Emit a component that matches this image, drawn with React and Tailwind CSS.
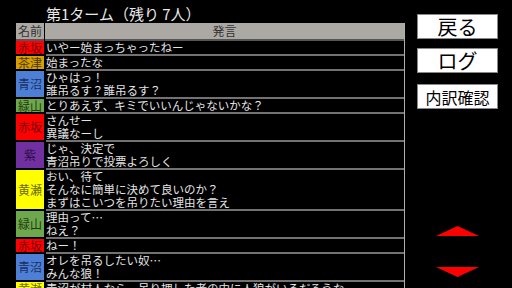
const rows = [
  { n: "赤坂", bg: "bg-[#ff0000]", fg: "text-[#7a0000]", t: ["いやー始まっちゃったねー"] },
  { n: "茶津", bg: "bg-[#d6a000]", fg: "text-[#4a3300]", t: ["始まったな"] },
  { n: "青沼", bg: "bg-[#4d7fd6]", fg: "text-[#1a3060]", t: ["ひゃはっ！", "誰吊るす？誰吊るす？"] },
  { n: "緑山", bg: "bg-[#6ea84c]", fg: "text-[#1e3a10]", t: ["とりあえず、キミでいいんじゃないかな？"] },
  { n: "赤坂", bg: "bg-[#ff0000]", fg: "text-[#7a0000]", t: ["さんせー", "異議なーし"] },
  { n: "紫", bg: "bg-[#7030a0]", fg: "text-[#2c0c44]", t: ["じゃ、決定で", "青沼吊りで投票よろしく"] },
  { n: "黄瀬", bg: "bg-[#ffff00]", fg: "text-[#6a6a00]", t: ["おい、待て", "そんなに簡単に決めて良いのか？", "まずはこいつを吊りたい理由を言え"] },
  { n: "緑山", bg: "bg-[#6ea84c]", fg: "text-[#1e3a10]", t: ["理由って…", "ねえ？"] },
  { n: "赤坂", bg: "bg-[#ff0000]", fg: "text-[#7a0000]", t: ["ねー！"] },
  { n: "青沼", bg: "bg-[#4d7fd6]", fg: "text-[#1a3060]", t: ["オレを吊るしたい奴…", "みんな狼！"] },
  { n: "黄瀬", bg: "bg-[#ffff00]", fg: "text-[#6a6a00]", t: ["青沼が村人なら、吊り押した者の中に人狼がいるだろうな"] },
];

const font = { fontFamily: '"Noto Sans CJK JP", "Noto Sans", sans-serif' };

export default function App() {
  return (
    <div className="w-[512px] h-[288px] bg-black overflow-hidden flex" style={font}>
      <div className="w-[405px] shrink-0 pl-[16px] flex flex-col">
        <div className="h-[23px] shrink-0 pl-[30px] flex items-end">
          <span className="text-[15px] leading-[18px] text-[#e8e8e8] whitespace-nowrap">第1ターム（残り 7人）</span>
        </div>
        <div className="flex flex-col border-r border-[#b0b0b0]">
          <div className="flex h-[18px] shrink-0">
            <div className="w-[28px] shrink-0 bg-[#aca8a4] border-b-2 border-[#555] flex items-center justify-center text-[12px] leading-none text-[#333]">名前</div>
            <div className="w-[1px] shrink-0 bg-black" />
            <div className="flex-1 bg-[#aca8a4] border-b-2 border-[#555] flex items-center justify-center text-[12px] leading-none text-[#333]">発言</div>
          </div>
          {rows.map((r, i) => (
            <div key={i} className="flex shrink-0">
              <div className={`w-[28px] shrink-0 ${r.bg} border-b-2 border-black flex items-center justify-center`}>
                <span className={`text-[12px] leading-none ${r.fg} whitespace-nowrap`}>{r.n}</span>
              </div>
              <div className="w-[2px] shrink-0 border-b-2 border-black" />
              <div className="flex-1 border-b-2 border-[#727272] flex flex-col">
                {r.t.map((l, j) => (
                  <div key={j} className="h-[13px] text-[11.5px] leading-[13px] text-[#e4e4e4] whitespace-nowrap">{l}</div>
                ))}
              </div>
            </div>
          ))}
        </div>
      </div>
      <div className="flex-1 flex flex-col pl-[12px]">
        <div className="mt-[14px] w-[81px] h-[25px] bg-white border border-[#888] flex items-center justify-center text-[20px] leading-none text-black">戻る</div>
        <div className="mt-[9px] w-[81px] h-[25px] bg-white border border-[#888] flex items-center justify-center text-[20px] leading-none text-black">ログ</div>
        <div className="mt-[11px] w-[81px] h-[25px] bg-white border border-[#888] flex items-center justify-center text-[16px] leading-none text-black">内訳確認</div>
        <div className="mt-[117px] ml-[19px]">
          <svg width="43" height="10" viewBox="0 0 43 10"><polygon points="21.5,0 43,10 0,10" fill="#ff0000" /></svg>
        </div>
        <div className="mt-[31px] ml-[19px]">
          <svg width="43" height="10" viewBox="0 0 43 10"><polygon points="0,0 43,0 21.5,10" fill="#ff0000" /></svg>
        </div>
      </div>
    </div>
  );
}
